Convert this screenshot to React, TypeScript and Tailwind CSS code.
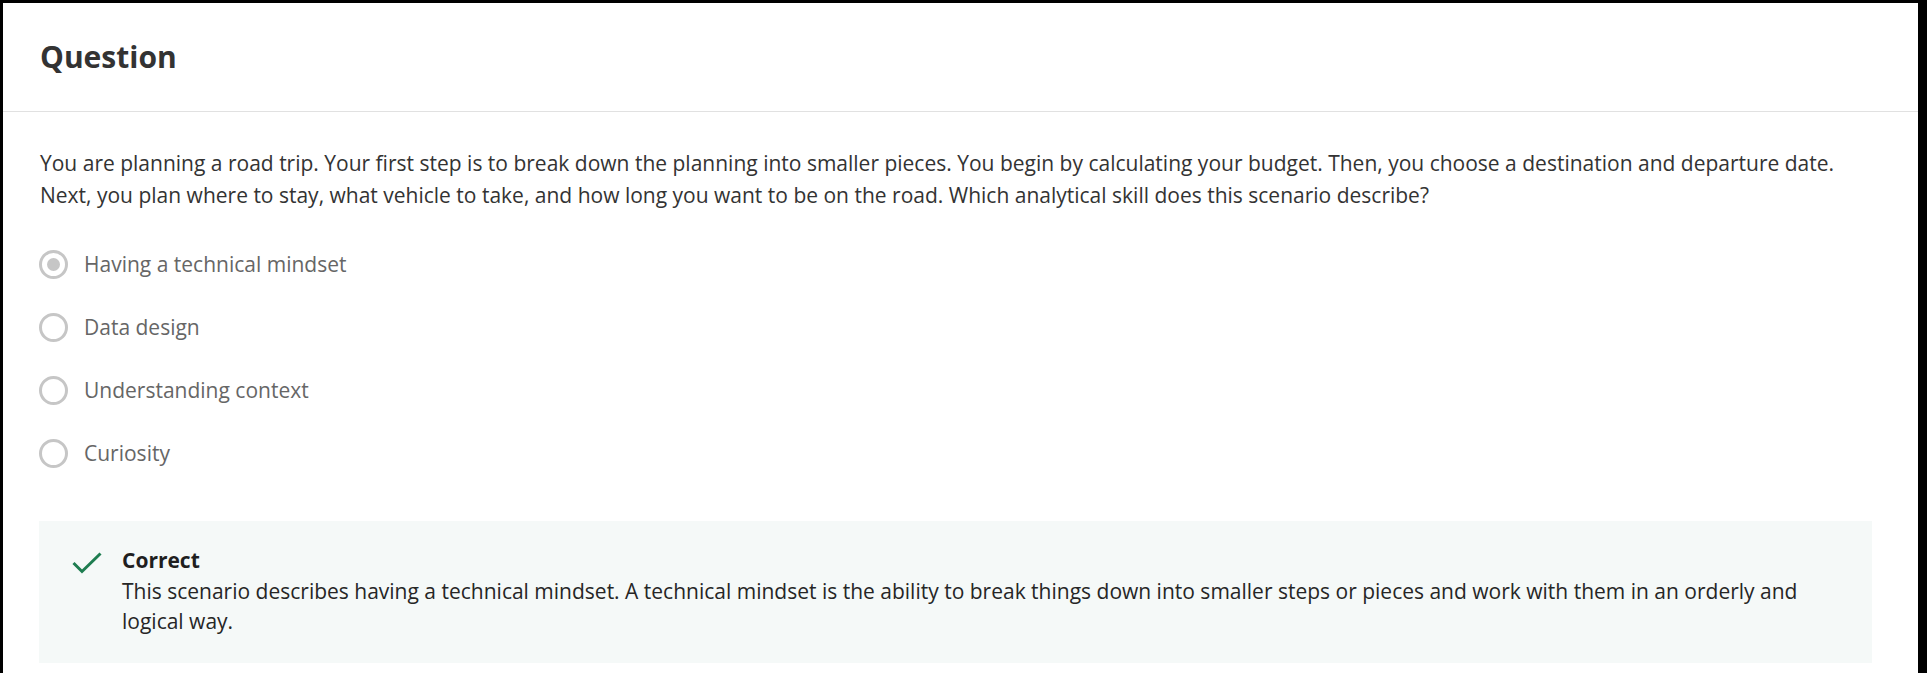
import React from 'react';

const options = [
  { label: 'Having a technical mindset', checked: true },
  { label: 'Data design', checked: false },
  { label: 'Understanding context', checked: false },
  { label: 'Curiosity', checked: false },
];

const Radio = ({ checked }: { checked: boolean }) => (
  <span className="w-[29px] h-[29px] shrink-0 rounded-full border-[3px] border-[#c6c6c6] flex items-center justify-center">
    {checked && <span className="w-[13px] h-[13px] rounded-full bg-[#c6c6c6]" />}
  </span>
);

const App = () => {
  return (
    <div className="w-[1927px] h-[673px] bg-black pl-[3px] pt-[3px] pr-[9px] font-['Open_Sans',sans-serif]">
      <div className="h-full bg-white flex flex-col">
        {/* Header */}
        <div className="h-[109px] flex items-center px-[37px] border-b border-[#e1e1e1] shrink-0">
          <h1 className="text-[30px] font-bold text-[#333333] leading-none">Question</h1>
        </div>

        <div className="pl-[36px] pr-[46px] pt-[35px]">
          <p className="text-[21px] leading-[32px] text-[#333333] pl-[1px]">
            You are planning a road trip. Your first step is to break down the planning into smaller pieces. You begin by
            calculating your budget. Then, you choose a destination and departure date. Next, you plan where to stay, what
            vehicle to take, and how long you want to be on the road. Which analytical skill does this scenario describe?
          </p>

          {/* Options */}
          <div className="mt-[39px] flex flex-col gap-[34px]">
            {options.map((o) => (
              <label key={o.label} className="flex items-center gap-[16px] h-[29px]">
                <Radio checked={o.checked} />
                <span className="text-[21px] leading-[29px] text-[#666666]">{o.label}</span>
              </label>
            ))}
          </div>

          {/* Feedback */}
          <div className="mt-[53px] bg-[#f5f9f8] flex items-start pl-[33px] pr-[40px] pt-[23px] pb-[27px]">
            <svg width="30" height="22" viewBox="0 0 30 22" className="mt-[8px] shrink-0" fill="none">
              <polyline points="1.5,11 10,19.5 28.5,1.5" stroke="#1e7d50" strokeWidth="3" />
            </svg>
            <div className="ml-[20px]">
              <div className="text-[21px] leading-[32px] font-bold text-[#1f1f1f]">Correct</div>
              <p className="text-[21px] leading-[30px] text-[#262626]">
                This scenario describes having a technical mindset. A technical mindset is the ability to break things down
                into smaller steps or pieces and work with them in an orderly and logical way.
              </p>
            </div>
          </div>
        </div>
      </div>
    </div>
  );
};

export default App;
